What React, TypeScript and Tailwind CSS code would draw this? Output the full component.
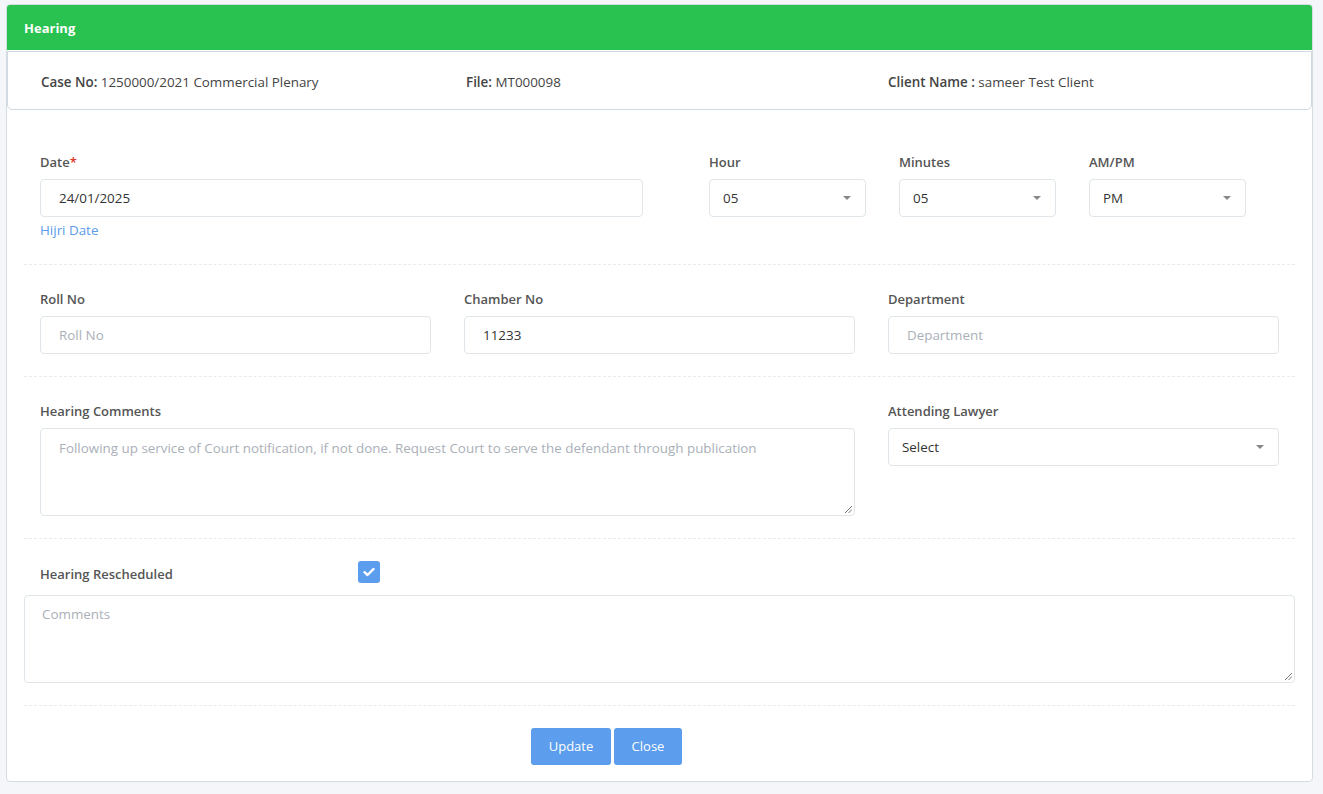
import React from "react";

const Caret = () => (
  <span className="absolute right-[14px] top-1/2 -translate-y-1/2 w-0 h-0 border-l-[4px] border-r-[4px] border-t-[4px] border-l-transparent border-r-transparent border-t-[#888]" />
);

const Label = ({ children }: { children: React.ReactNode }) => (
  <div className="text-[13px] font-semibold text-[#555] leading-[18px] mb-[8px]">{children}</div>
);

const Input = ({ value, placeholder }: { value?: string; placeholder?: string }) => (
  <div className="h-[38px] border border-[#dfe5e8] rounded-[4px] bg-white flex items-center px-[18px] text-[13.4px]">
    {value ? <span className="text-[#333]">{value}</span> : <span className="text-[#aab0b8]">{placeholder}</span>}
  </div>
);

const Select = ({ value }: { value: string }) => (
  <div className="relative h-[38px] border border-[#dfe5e8] rounded-[4px] bg-white flex items-center px-[13px] text-[13.4px] text-[#333]">
    {value}
    <Caret />
  </div>
);

const Resize = () => (
  <svg className="absolute right-[2px] bottom-[2px]" width="8" height="8" viewBox="0 0 8 8">
    <line x1="1" y1="8" x2="8" y2="1" stroke="#777" strokeWidth="1" />
    <line x1="4.5" y1="8" x2="8" y2="4.5" stroke="#777" strokeWidth="1" />
  </svg>
);

const Divider = () => <div className="border-t border-dashed border-[#e6ebee] mx-0" />;

export default function App() {
  return (
    <div className="min-h-[794px] bg-[#f4f6fa] pt-[4px] px-[6px] pb-[12px]" style={{ fontFamily: '"Open Sans", "Noto Sans", sans-serif' }}>
      <div className="w-[1307px] bg-white border border-[#d5dde3] rounded-[4px] overflow-hidden">
        <div className="h-[45px] bg-[#29c14f] flex items-center px-[17px] pt-[2px] text-white text-[13px] font-bold">Hearing</div>
        <div className="mx-[0px] mt-[1px] h-[59px] border border-[#cfd9e1] rounded-b-[5px] flex items-center pt-[3px] text-[13.4px] text-[#444]">
          <div className="w-[424px] pl-[33px]"><span className="font-semibold text-[#444]">Case No:</span> 1250000/2021 Commercial Plenary</div>
          <div className="w-[423px] pl-[34px]"><span className="font-semibold">File:</span> MT000098</div>
          <div className="pl-[33px]"><span className="font-semibold">Client Name :</span> sameer Test Client</div>
        </div>
        <div className="px-[17px] pt-[43px]">
          {/* Row 1 */}
          <div className="flex px-[16px]">
            <div className="w-[603px]">
              <Label>Date<span className="text-[#e3342f]">*</span></Label>
              <Input value="24/01/2025" />
              <div className="text-[13.4px] text-[#5b9bea] mt-[4px] leading-[18px]">Hijri Date</div>
            </div>
            <div className="ml-[66px] w-[157px]">
              <Label>Hour</Label>
              <Select value="05" />
            </div>
            <div className="ml-[33px] w-[157px]">
              <Label>Minutes</Label>
              <Select value="05" />
            </div>
            <div className="ml-[33px] w-[157px]">
              <Label>AM/PM</Label>
              <Select value="PM" />
            </div>
          </div>
          <div className="h-[25px]" />
          <Divider />
          {/* Row 2 */}
          <div className="grid grid-cols-3 gap-[33px] px-[16px] pt-[25px]">
            <div>
              <Label>Roll No</Label>
              <Input placeholder="Roll No" />
            </div>
            <div>
              <Label>Chamber No</Label>
              <Input value="11233" />
            </div>
            <div>
              <Label>Department</Label>
              <Input placeholder="Department" />
            </div>
          </div>
          <div className="h-[22px]" />
          <Divider />
          {/* Row 3 */}
          <div className="flex px-[16px] pt-[25px]">
            <div className="w-[815px]">
              <Label>Hearing Comments</Label>
              <div className="relative h-[88px] border border-[#dfe5e8] rounded-[4px] px-[18px] pt-[9px] text-[13.4px] text-[#aab0b8]">
                Following up service of Court notification, if not done. Request Court to serve the defendant through publication
                <Resize />
              </div>
            </div>
            <div className="ml-[33px] w-[391px]">
              <Label>Attending Lawyer</Label>
              <Select value="Select" />
            </div>
          </div>
          <div className="h-[22px]" />
          <Divider />
          {/* Row 4 */}
          <div className="flex items-center px-[16px] pt-[22px] pb-[12px]">
            <div className="w-[318px] text-[13px] font-semibold text-[#555] leading-[18px] translate-y-[2px]">Hearing Rescheduled</div>
            <div className="w-[22px] h-[22px] rounded-[3px] bg-[#5c9ded] flex items-center justify-center">
              <svg width="12" height="10" viewBox="0 0 12 10">
                <path d="M1.5 5.2 L4.5 8 L10.5 2" stroke="white" strokeWidth="2.4" fill="none" strokeLinecap="round" strokeLinejoin="round" />
              </svg>
            </div>
          </div>
          <div className="relative h-[88px] border border-[#dfe5e8] rounded-[4px] px-[17px] pt-[8px] text-[13.4px] text-[#aab0b8]">
            Comments
            <Resize />
          </div>
          <div className="h-[22px]" />
          <Divider />
          <div className="flex justify-center gap-[3px] pt-[22px] pb-[16px] pr-[106px]">
            <button className="h-[37px] w-[80px] rounded-[3px] bg-[#5c9ded] text-white text-[13px]">Update</button>
            <button className="h-[37px] w-[68px] rounded-[3px] bg-[#5c9ded] text-white text-[13px]">Close</button>
          </div>
        </div>
      </div>
    </div>
  );
}
